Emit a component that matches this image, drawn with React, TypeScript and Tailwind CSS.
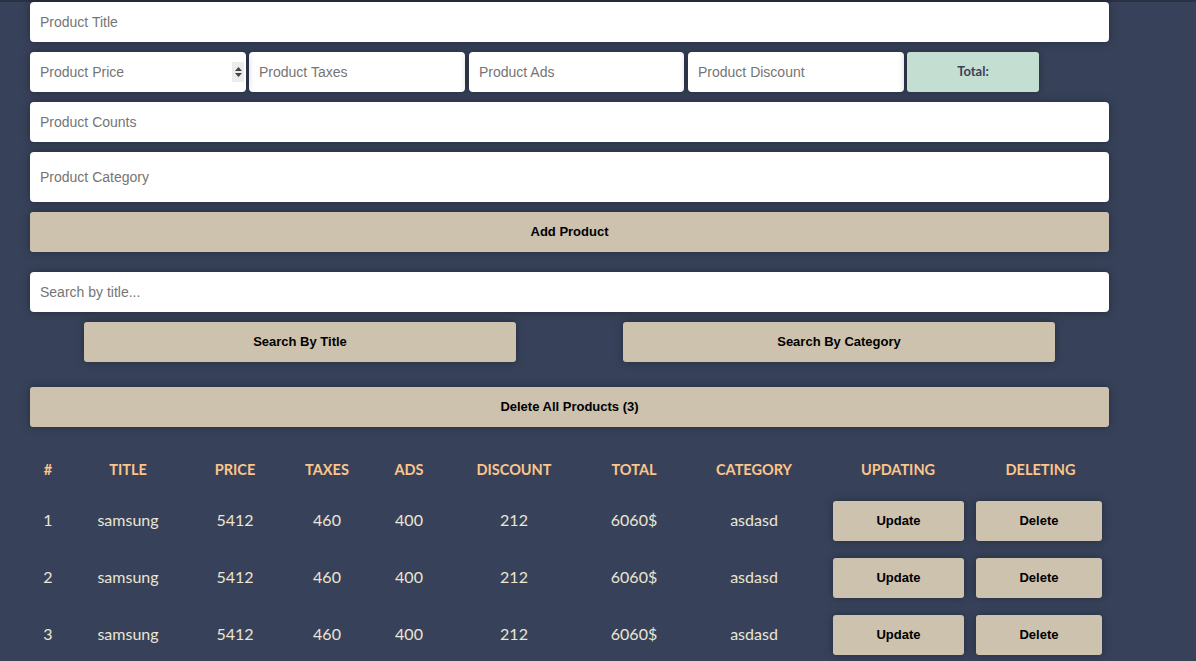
import React from 'react';

const rows = [1, 2, 3].map((id) => ({
  id,
  title: 'samsung',
  price: 5412,
  taxes: 460,
  ads: 400,
  discount: 212,
  total: '6060$',
  category: 'asdasd',
}));

const inputCls =
  "h-10 w-full rounded bg-white px-[10px] text-[14px] text-[#333] placeholder:text-[#757575] shadow-[0_0_8px_rgba(0,0,0,0.35)] outline-none font-['Liberation_Sans',Arial,sans-serif]";

const btnCls =
  "h-10 rounded-[3px] bg-[#cdc2ae] text-[13px] font-bold text-black shadow-[0_0_8px_rgba(0,0,0,0.35)] font-['Liberation_Sans',Arial,sans-serif]";

export default function App() {
  return (
    <div className="min-h-[661px] w-full border-t-2 border-[#2b3142] bg-[#37425a] font-['Lato',sans-serif]">
      <div className="ml-[30px] w-[1079px]">
        <input className={inputCls} placeholder="Product Title" />

        <div className="mt-[10px] flex items-center">
          <div className="relative w-[216px]">
            <input className={inputCls} placeholder="Product Price" />
            <span className="absolute right-[2px] top-[10px] flex h-5 w-[12px] flex-col items-center justify-center gap-[2px] bg-[#ececec]">
              <svg width="7" height="4" viewBox="0 0 7 4"><path d="M0 4 L3.5 0 L7 4 Z" fill="#444" /></svg>
              <svg width="7" height="4" viewBox="0 0 7 4"><path d="M0 0 L3.5 4 L7 0 Z" fill="#444" /></svg>
            </span>
          </div>
          <div className="ml-[3px] w-[216px]">
            <input className={inputCls} placeholder="Product Taxes" />
          </div>
          <div className="ml-[4px] w-[215px]">
            <input className={inputCls} placeholder="Product Ads" />
          </div>
          <div className="ml-[4px] w-[216px]">
            <input className={inputCls} placeholder="Product Discount" />
          </div>
          <div className="ml-[3px] flex h-10 w-[132px] items-center justify-center rounded-[3px] bg-[#c4dfd1] text-[13px] font-bold text-[#3b3f5c] shadow-[0_0_8px_rgba(0,0,0,0.35)]">
            Total:
          </div>
        </div>

        <input className={`${inputCls} mt-[10px]`} placeholder="Product Counts" />
        <input className={`${inputCls} mt-[10px] h-[50px]`} placeholder="Product Category" />

        <button className={`${btnCls} mt-[10px] w-full`}>Add Product</button>

        <input className={`${inputCls} mt-5`} placeholder="Search by title..." />

        <div className="mt-[10px] flex justify-between px-[54px]">
          <button className={`${btnCls} w-[432px]`}>Search By Title</button>
          <button className={`${btnCls} w-[432px]`}>Search By Category</button>
        </div>

        <button className={`${btnCls} mt-[25px] w-full`}>Delete All Products (3)</button>

        <table className="mt-[22px] w-[1079px] table-fixed border-collapse text-center">
          <colgroup>
            <col className="w-[36px]" />
            <col className="w-[124px]" />
            <col className="w-[90px]" />
            <col className="w-[94px]" />
            <col className="w-[70px]" />
            <col className="w-[140px]" />
            <col className="w-[100px]" />
            <col className="w-[140px]" />
            <col className="w-[148px]" />
            <col className="w-[137px]" />
          </colgroup>
          <thead>
            <tr className="h-[42px] text-[14.5px] font-bold text-[#fcc58a]">
              <th>#</th>
              <th>TITLE</th>
              <th>PRICE</th>
              <th>TAXES</th>
              <th>ADS</th>
              <th>DISCOUNT</th>
              <th>TOTAL</th>
              <th>CATEGORY</th>
              <th>UPDATING</th>
              <th>DELETING</th>
            </tr>
          </thead>
          <tbody className="text-[16px] text-[#ece5d2]">
            {rows.map((r) => (
              <tr key={r.id} className="h-[57px]">
                <td>{r.id}</td>
                <td>{r.title}</td>
                <td>{r.price}</td>
                <td>{r.taxes}</td>
                <td>{r.ads}</td>
                <td>{r.discount}</td>
                <td>{r.total}</td>
                <td>{r.category}</td>
                <td className="text-left">
                  <button className={`${btnCls} ml-[9px] mt-[2px] w-[131px]`}>Update</button>
                </td>
                <td className="text-left">
                  <button className={`${btnCls} ml-[4px] mt-[2px] w-[126px]`}>Delete</button>
                </td>
              </tr>
            ))}
          </tbody>
        </table>
      </div>
    </div>
  );
}
